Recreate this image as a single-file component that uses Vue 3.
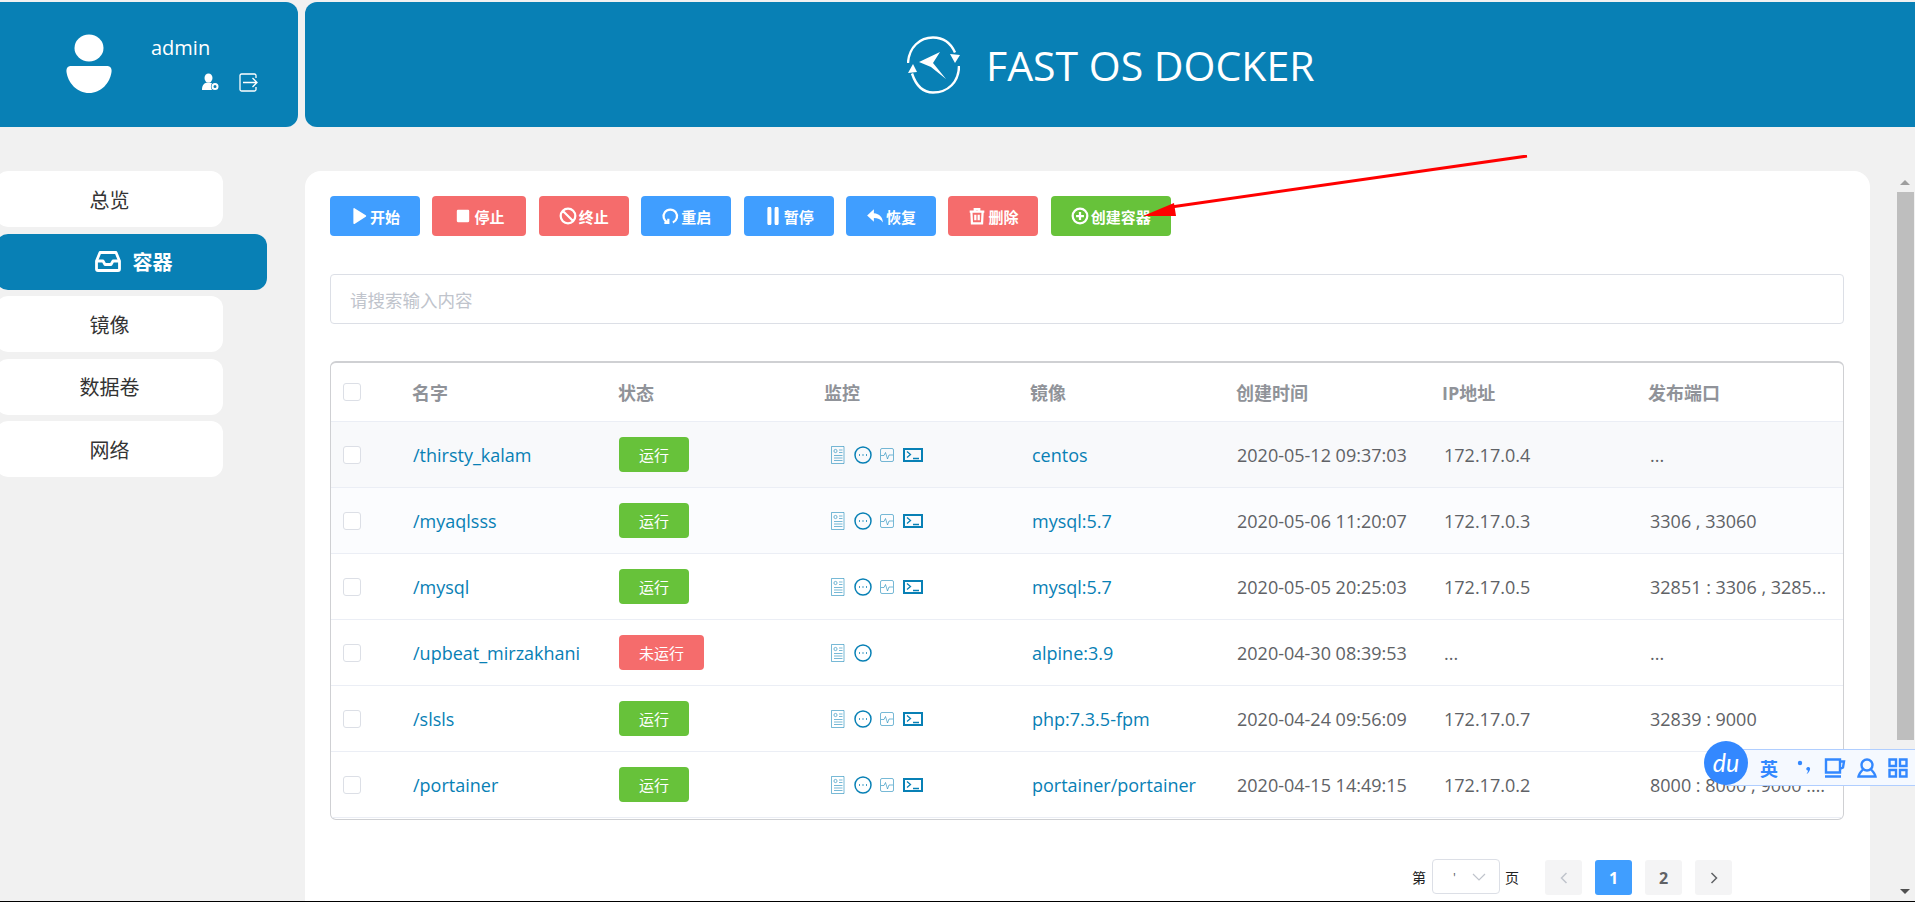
<template>
  <div class="page">
    <header class="top">
      <div class="user-box">
        <svg class="avatar" viewBox="0 0 46 60" width="46" height="60">
          <ellipse cx="23" cy="14" rx="14.5" ry="13.5" fill="#fff" />
          <path d="M5 32h36c3 0 5 2 4.500 6C44 49 35 59 23 59S2 49 .5 38C0 34 2 32 5 32z" fill="#fff" />
        </svg>
        <div class="user-info">
          <div class="user-name">admin</div>
          <div class="user-actions">
            <svg viewBox="0 0 18 18" width="18" height="18">
              <ellipse cx="7.500" cy="5" rx="4" ry="4.600" fill="#fff" />
              <path d="M1 17c0-5 2-7.500 6.500-7.500 1.500 0 2.500.3 3.500 1-1.500 1.500-1.500 4.500 0 6.500z" fill="#fff" />
              <circle cx="14" cy="13.500" r="2.500" fill="none" stroke="#fff" stroke-width="2" />
            </svg>
            <svg viewBox="0 0 19 19" width="19" height="19" fill="none" stroke="#fff" stroke-width="1.300">
              <path d="M17 5V2.500A1.500 1.500 0 0 0 15.500 1H2.500A1.500 1.500 0 0 0 1 2.500v14A1.500 1.500 0 0 0 2.500 18h13a1.500 1.500 0 0 0 1.500-1.500V14" />
              <path d="M4 9.500h14M13.500 5l4.500 4.500-4.500 4.500" />
            </svg>
          </div>
        </div>
      </div>
      <div class="brand">
        <svg class="logo" viewBox="0 0 53 58" width="53" height="58">
          <g fill="none" stroke="#fff" stroke-width="2.400">
            <path d="M1 27C2 11 13 1.500 26 1.500c11 0 18 6 22 15" />
            <path d="M52 30c0 16-11 26.500-26 26.500-10 0-17-7-21-19" />
          </g>
          <path d="M48 27l-5-9 10 1zM6 28l-5 9 9-1z" fill="#fff" />
          <path d="M12 26l21-10-7 11 13 16-15-12z" fill="#fff" />
        </svg>
        <span class="brand-text">FAST OS DOCKER</span>
      </div>
    </header>

    <div class="content">
      <nav class="side">
        <a v-for="item in navItems" :key="item.name" class="nav-item" :class="{ active: item.active }">
          <svg v-if="item.active" viewBox="0 0 26 21" width="26" height="21" fill="none" stroke="#fff" stroke-width="2.800" stroke-linejoin="round">
            <path d="M5 1.500h16l3.500 8.500v8a1.500 1.500 0 0 1-1.500 1.500H3A1.500 1.500 0 0 1 1.500 18v-8z" />
            <path d="M1.500 10H8l2 3.500h6l2-3.500h6.500" />
          </svg>
          {{ item.name }}
        </a>
      </nav>

      <main class="card">
        <div class="toolbar">
          <button v-for="b in buttons" :key="b.text" class="btn" :class="b.type">
            <svg viewBox="0 0 16 16" width="18" height="18" :class="b.line ? 'ico-line' : 'ico-fill'">
              <path :d="b.icon" />
            </svg>
            <span>{{ b.text }}</span>
          </button>
        </div>

        <div class="search">请搜索输入内容</div>

        <div class="table">
          <div class="row head">
            <span class="check"></span>
            <span v-for="h in columns" :key="h">{{ h }}</span>
          </div>
          <div v-for="(c, i) in containers" :key="c.name" class="row" :class="'row-' + i">
            <span class="check"></span>
            <span class="link">{{ c.name }}</span>
            <span><em class="tag" :class="{ off: !c.running }">{{ c.running ? '运行' : '未运行' }}</em></span>
            <span class="monitor">
              <svg viewBox="0 0 14 18" width="14" height="18" class="m-light">
                <path d="M.5.5h12.500v17H.5z" />
                <circle cx="4.500" cy="5" r="1.600" />
                <path d="M8 4h3.500M8 6.500h3.500M3 9.500h8.500M3 12h8.500M3 14.500h8.500" />
              </svg>
              <svg viewBox="0 0 18 18" width="18" height="18" class="m-dark">
                <circle cx="9" cy="9" r="8" />
                <path d="M5 9h1M8.500 9h1M12 9h1" stroke-width="1.600" />
              </svg>
              <template v-if="c.running">
                <svg viewBox="0 0 14 14" width="14" height="14" class="m-light">
                  <rect x=".5" y=".5" width="13" height="13" rx="1.500" />
                  <path d="M1 7.500h3l1.500-3 2 6.500 1.500-4h4" />
                </svg>
                <svg viewBox="0 0 20 14" width="20" height="14" class="m-term">
                  <rect x="1" y="1" width="18" height="12" />
                  <path d="M4 3.500l3.500 3L4 9.500" stroke-width="1.300" />
                  <path d="M10 10.500h6" stroke-width="1.500" />
                </svg>
              </template>
            </span>
            <span class="link shifted">{{ c.image }}</span>
            <span>{{ c.created }}</span>
            <span class="shifted">{{ c.ip }}</span>
            <span class="shifted port">{{ c.port }}</span>
          </div>
        </div>

        <div class="pager">
          <span class="pager-label">第</span>
          <div class="pager-select">
            <span>'</span>
            <svg viewBox="0 0 14 8" width="14" height="8" fill="none" stroke="#c0c4cc" stroke-width="1.200">
              <path d="M1 1l6 6 6-6" />
            </svg>
          </div>
          <span class="pager-label">页</span>
          <div class="pages">
            <button class="page-btn disabled">
              <svg viewBox="0 0 8 12" width="8" height="12" fill="none" stroke="#c0c4cc" stroke-width="1.500"><path d="M6.500 1l-5 5 5 5" /></svg>
            </button>
            <button class="page-btn current">1</button>
            <button class="page-btn">2</button>
            <button class="page-btn">
              <svg viewBox="0 0 8 12" width="8" height="12" fill="none" stroke="#606266" stroke-width="1.500"><path d="M1.500 1l5 5-5 5" /></svg>
            </button>
          </div>
        </div>
      </main>

      <div class="scrollbar">
        <i class="arrow-up"></i>
        <div class="thumb"></div>
        <i class="arrow-down"></i>
      </div>
    </div>

    <!-- 红色标注箭头 -->
    <svg class="mark" viewBox="0 0 400 70" width="400" height="70">
      <path d="M386 1L30 52" stroke="#f00" stroke-width="3" />
      <path d="M2 61L33 48l2 13z" fill="#f00" />
    </svg>

    <!-- 输入法悬浮条 -->
    <div class="ime">
      <div class="ime-logo">du</div>
      <span class="ime-lang">英</span>
      <svg viewBox="0 0 18 20" width="18" height="20" class="ime-punct">
        <circle cx="3" cy="5" r="2.200" />
        <path d="M10 9.500c2-1 3.500 0 3 2-.4 1.800-1.500 3.500-3.500 4.500 1-1.500 1.500-2.500 1.500-3.500-1.500 0-2.500-2-1-3z" />
      </svg>
      <svg viewBox="0 0 22 20" width="22" height="20" class="ime-line">
        <path d="M2 1.500h14v13H2zM16 3.500h4l-1 6-3 1.500M1 18.500h16" />
      </svg>
      <svg viewBox="0 0 20 20" width="20" height="20" class="ime-line">
        <circle cx="10" cy="7" r="5.500" />
        <path d="M6 11.500C4 13.500 2 15.500 1.500 18.500h17c-.5-3-2.500-5-4.500-7" />
      </svg>
      <svg viewBox="0 0 20 20" width="20" height="20" class="ime-line">
        <path d="M1.500 1.500h6.500v6.500H1.500zM12 1.500h6.500v6.500H12zM1.500 12h6.500v6.500H1.500zM12 12h6.500v6.500H12z" />
      </svg>
    </div>
  </div>
</template>

<script setup>
const navItems = [
  { name: '总览' },
  { name: '容器', active: true },
  { name: '镜像' },
  { name: '数据卷' },
  { name: '网络' },
]

const buttons = [
  { text: '开始', type: 'primary', icon: 'M3 1.500c0-.5.5-.8 1-.5l10 6.300c.5.3.5 1 0 1.300L4 15c-.5.300-1 0-1-.5z' },
  { text: '停止', type: 'danger wide', icon: 'M3.500 2.500h9a1 1 0 0 1 1 1v9a1 1 0 0 1-1 1h-9a1 1 0 0 1-1-1v-9a1 1 0 0 1 1-1z' },
  { text: '终止', type: 'danger', line: true, icon: 'M8 1.500a6.500 6.500 0 1 0 0 13a6.500 6.500 0 1 0 0-13zM3.500 3.500l9 9' },
  { text: '重启', type: 'primary', line: true, icon: 'M6 13.800A6 6 0 1 1 10.500 13.800M6.500 10.500v3.500H3' },
  { text: '暂停', type: 'primary', icon: 'M3 1.500a1.800 1.800 0 0 1 3.600 0v13a1.800 1.800 0 0 1-3.600 0zM9.400 1.500a1.800 1.800 0 0 1 3.600 0v13a1.800 1.800 0 0 1-3.600 0z' },
  { text: '恢复', type: 'primary', icon: 'M7 2L1 7.500 7 13V9.800c3.500 0 6 1 8 4 0-4.500-3-7.800-8-8.300z' },
  { text: '删除', type: 'danger', line: true, icon: 'M1.500 4h13M6 4V1.800h4V4M3 4l.5 10.500h9L13 4M6.500 6.800v5M9.500 6.800v5' },
  { text: '创建容器', type: 'success', line: true, icon: 'M8 1.500a6.500 6.500 0 1 0 0 13a6.500 6.500 0 1 0 0-13zM8 4.500v7M4.500 8h7' },
]

const columns = ['名字', '状态', '监控', '镜像', '创建时间', 'IP地址', '发布端口']

const containers = [
  { name: '/thirsty_kalam', running: true, image: 'centos', created: '2020-05-12 09:37:03', ip: '172.17.0.4', port: '...' },
  { name: '/myaqlsss', running: true, image: 'mysql:5.7', created: '2020-05-06 11:20:07', ip: '172.17.0.3', port: '3306 , 33060' },
  { name: '/mysql', running: true, image: 'mysql:5.7', created: '2020-05-05 20:25:03', ip: '172.17.0.5', port: '32851 : 3306 , 32850 : 33060' },
  { name: '/upbeat_mirzakhani', running: false, image: 'alpine:3.9', created: '2020-04-30 08:39:53', ip: '...', port: '...' },
  { name: '/slsls', running: true, image: 'php:7.3.5-fpm', created: '2020-04-24 09:56:09', ip: '172.17.0.7', port: '32839 : 9000' },
  { name: '/portainer', running: true, image: 'portainer/portainer', created: '2020-04-15 14:49:15', ip: '172.17.0.2', port: '8000 : 8000 , 9000 : 9000' },
]
</script>

<style>
body {
  background: #f1f1f1;
}
</style>

<style scoped>
.page {
  position: relative;
  display: flex;
  flex-direction: column;
  height: 902px;
  padding-top: 2px;
  box-sizing: border-box;
  overflow: hidden;
  border-bottom: 1px solid #000;
  background: #f1f1f1;
  font-family: "Open Sans", "Noto Sans CJK SC", sans-serif;
  color: #606266;
}

.top {
  display: flex;
  gap: 7px;
  height: 125px;
  flex: none;
}

.user-box {
  display: flex;
  width: 298px;
  padding-left: 66px;
  box-sizing: border-box;
  background: #0880b5;
  border-radius: 0 12px 12px 0;
  color: #fff;
}

.avatar {
  margin-top: 32px;
}

.user-info {
  margin-left: 39px;
  width: 107px;
}

.user-name {
  margin-top: 30px;
  font-size: 20px;
  line-height: 32px;
}

.user-actions {
  display: flex;
  justify-content: flex-end;
  gap: 20px;
  margin-top: 9px;
}

.brand {
  flex: 1;
  display: flex;
  align-items: center;
  padding-left: 602px;
  background: #0880b5;
  border-radius: 12px 0 0 12px;
  color: #fff;
}

.brand-text {
  margin-left: 26px;
  font-size: 41px;
}

.content {
  flex: 1;
  min-height: 0;
  display: flex;
  margin-top: 44px;
}

.side {
  flex: none;
  width: 305px;
  display: flex;
  flex-direction: column;
  gap: 6.500px;
}

.nav-item {
  display: flex;
  align-items: center;
  justify-content: center;
  gap: 12px;
  width: 227px;
  height: 56px;
  margin-left: -4px;
  background: #fff;
  border-radius: 12px;
  font-size: 20px;
  color: #333;
}

.nav-item.active {
  width: 271px;
  background: #0880b5;
  color: #fff;
  font-weight: 700;
  padding-left: 4px;
  box-sizing: border-box;
}

.card {
  flex: none;
  width: 1565px;
  padding: 25px 26px 0 25px;
  box-sizing: border-box;
  background: #fff;
  border-radius: 16px 16px 0 0;
}

.toolbar {
  display: flex;
  gap: 12.400px;
}

.btn {
  display: inline-flex;
  align-items: center;
  justify-content: center;
  gap: 2px;
  height: 40px;
  padding: 0 20px;
  border: 0;
  border-radius: 4px;
  color: #fff;
  font-family: inherit;
  font-size: 15px;
  font-weight: 700;
}

.btn.primary {
  background: #409eff;
}

.btn.danger {
  background: #f56c6c;
}

.btn.success {
  background: #67c23a;
}

.btn.wide {
  padding: 0 22px;
}

.ico-fill {
  fill: currentColor;
}

.ico-line {
  fill: none;
  stroke: currentColor;
  stroke-width: 2;
}

.search {
  display: flex;
  align-items: center;
  height: 50px;
  margin-top: 38px;
  padding-left: 19px;
  box-sizing: border-box;
  border: 1px solid #dcdfe6;
  border-radius: 4px;
  color: #c0c4cc;
  font-size: 17.500px;
}

.table {
  margin-top: 37px;
  padding-bottom: 1px;
  border: 1px solid #cfd0d3;
  border-top-width: 2px;
  border-radius: 6px;
  overflow: hidden;
}

.row {
  display: grid;
  grid-template-columns: 81px 206px 206px 206px 206px 206px 206px 195px;
  align-items: center;
  height: 66px;
  box-sizing: border-box;
  border-bottom: 1px solid #ebeef5;
  font-size: 18px;
}

.row > span {
  white-space: nowrap;
  overflow: hidden;
  text-overflow: ellipsis;
  padding-left: 1px;
}

.row > .check {
  width: 18px;
  height: 18px;
  margin-left: 12px;
  padding: 0;
  box-sizing: border-box;
  background: #fff;
  border: 1px solid #dcdfe6;
  border-radius: 3px;
}

.row.head {
  height: 59px;
  color: #909399;
  font-weight: 700;
}

.row.head > span {
  padding-left: 0;
}

.row-0 {
  background: #f8f9fb;
}

.row-1 {
  background: #fbfcfe;
}

.link {
  color: #0880b5;
}

.row > .shifted {
  padding-left: 2px;
}

.row > .port {
  padding-right: 14px;
}

.tag {
  display: inline-flex;
  align-items: center;
  justify-content: center;
  height: 35px;
  padding: 0 20px;
  background: #67c23a;
  border-radius: 4px;
  color: #fff;
  font-size: 15px;
  font-style: normal;
}

.tag.off {
  background: #f56c6c;
}

.row > .monitor {
  display: flex;
  align-items: center;
  gap: 8.500px;
  padding-left: 7px;
}

.m-light {
  fill: none;
  stroke: #0880b5;
  stroke-opacity: 0.55;
}

.m-dark {
  fill: none;
  stroke: #0880b5;
  stroke-width: 1.500;
}

.m-term {
  fill: none;
  stroke: #0880b5;
  stroke-width: 2;
}

.pager {
  display: flex;
  align-items: center;
  margin-top: 38px;
  padding-left: 1082px;
  height: 37px;
}

.pager-label {
  font-size: 14px;
  color: #222;
}

.pager-select {
  display: flex;
  align-items: center;
  justify-content: space-between;
  width: 68px;
  height: 35px;
  margin: 0 5px 0 6px;
  padding: 0 13px 0 20px;
  box-sizing: border-box;
  border: 1px solid #dcdfe6;
  border-radius: 4px;
  font-size: 13px;
}

.pages {
  display: flex;
  gap: 13px;
  margin-left: 26px;
  padding-top: 2px;
}

.page-btn {
  display: flex;
  align-items: center;
  justify-content: center;
  width: 37px;
  height: 35px;
  padding: 0;
  border: 0;
  border-radius: 3px;
  background: #f4f4f5;
  color: #606266;
  font-family: inherit;
  font-size: 16px;
  font-weight: 700;
}

.page-btn.current {
  background: #409eff;
  color: #fff;
}

.scrollbar {
  position: relative;
  flex: none;
  width: 18px;
  margin-left: 27px;
}

.arrow-up,
.arrow-down {
  position: absolute;
  left: 3px;
  width: 0;
  height: 0;
  border-left: 5px solid transparent;
  border-right: 5px solid transparent;
}

.arrow-up {
  top: 9px;
  border-bottom: 5px solid #9e9e9e;
}

.arrow-down {
  bottom: 7px;
  border-top: 5px solid #505050;
}

.thumb {
  position: absolute;
  top: 21px;
  left: 0;
  width: 17px;
  height: 548px;
  background: #bebebe;
}

.mark {
  position: absolute;
  left: 1141px;
  top: 155px;
}

.ime {
  position: absolute;
  left: 1725px;
  top: 749px;
  width: 190px;
  height: 37px;
  display: flex;
  align-items: center;
  padding-left: 34px;
  box-sizing: border-box;
  background: #f5f9ff;
  border: 1px solid #b0ceff;
  border-right: 0;
}

.ime svg {
  flex: none;
}

.ime-logo {
  position: absolute;
  left: -22px;
  top: -9px;
  width: 44px;
  height: 44px;
  border-radius: 50%;
  background: #3388ff;
  color: #fff;
  font-family: "Lato", sans-serif;
  font-size: 25px;
  font-style: italic;
  line-height: 42px;
  text-align: center;
}

.ime-lang {
  flex: none;
  width: 18px;
  color: #3388ff;
  font-size: 18px;
  font-weight: 700;
  font-family: "Noto Sans CJK SC", sans-serif;
  margin-right: 19px;
}

.ime-punct {
  fill: #3388ff;
  margin-right: 9px;
}

.ime-line {
  fill: none;
  stroke: #3388ff;
  stroke-width: 2.400;
  margin-right: 11px;
}
</style>
